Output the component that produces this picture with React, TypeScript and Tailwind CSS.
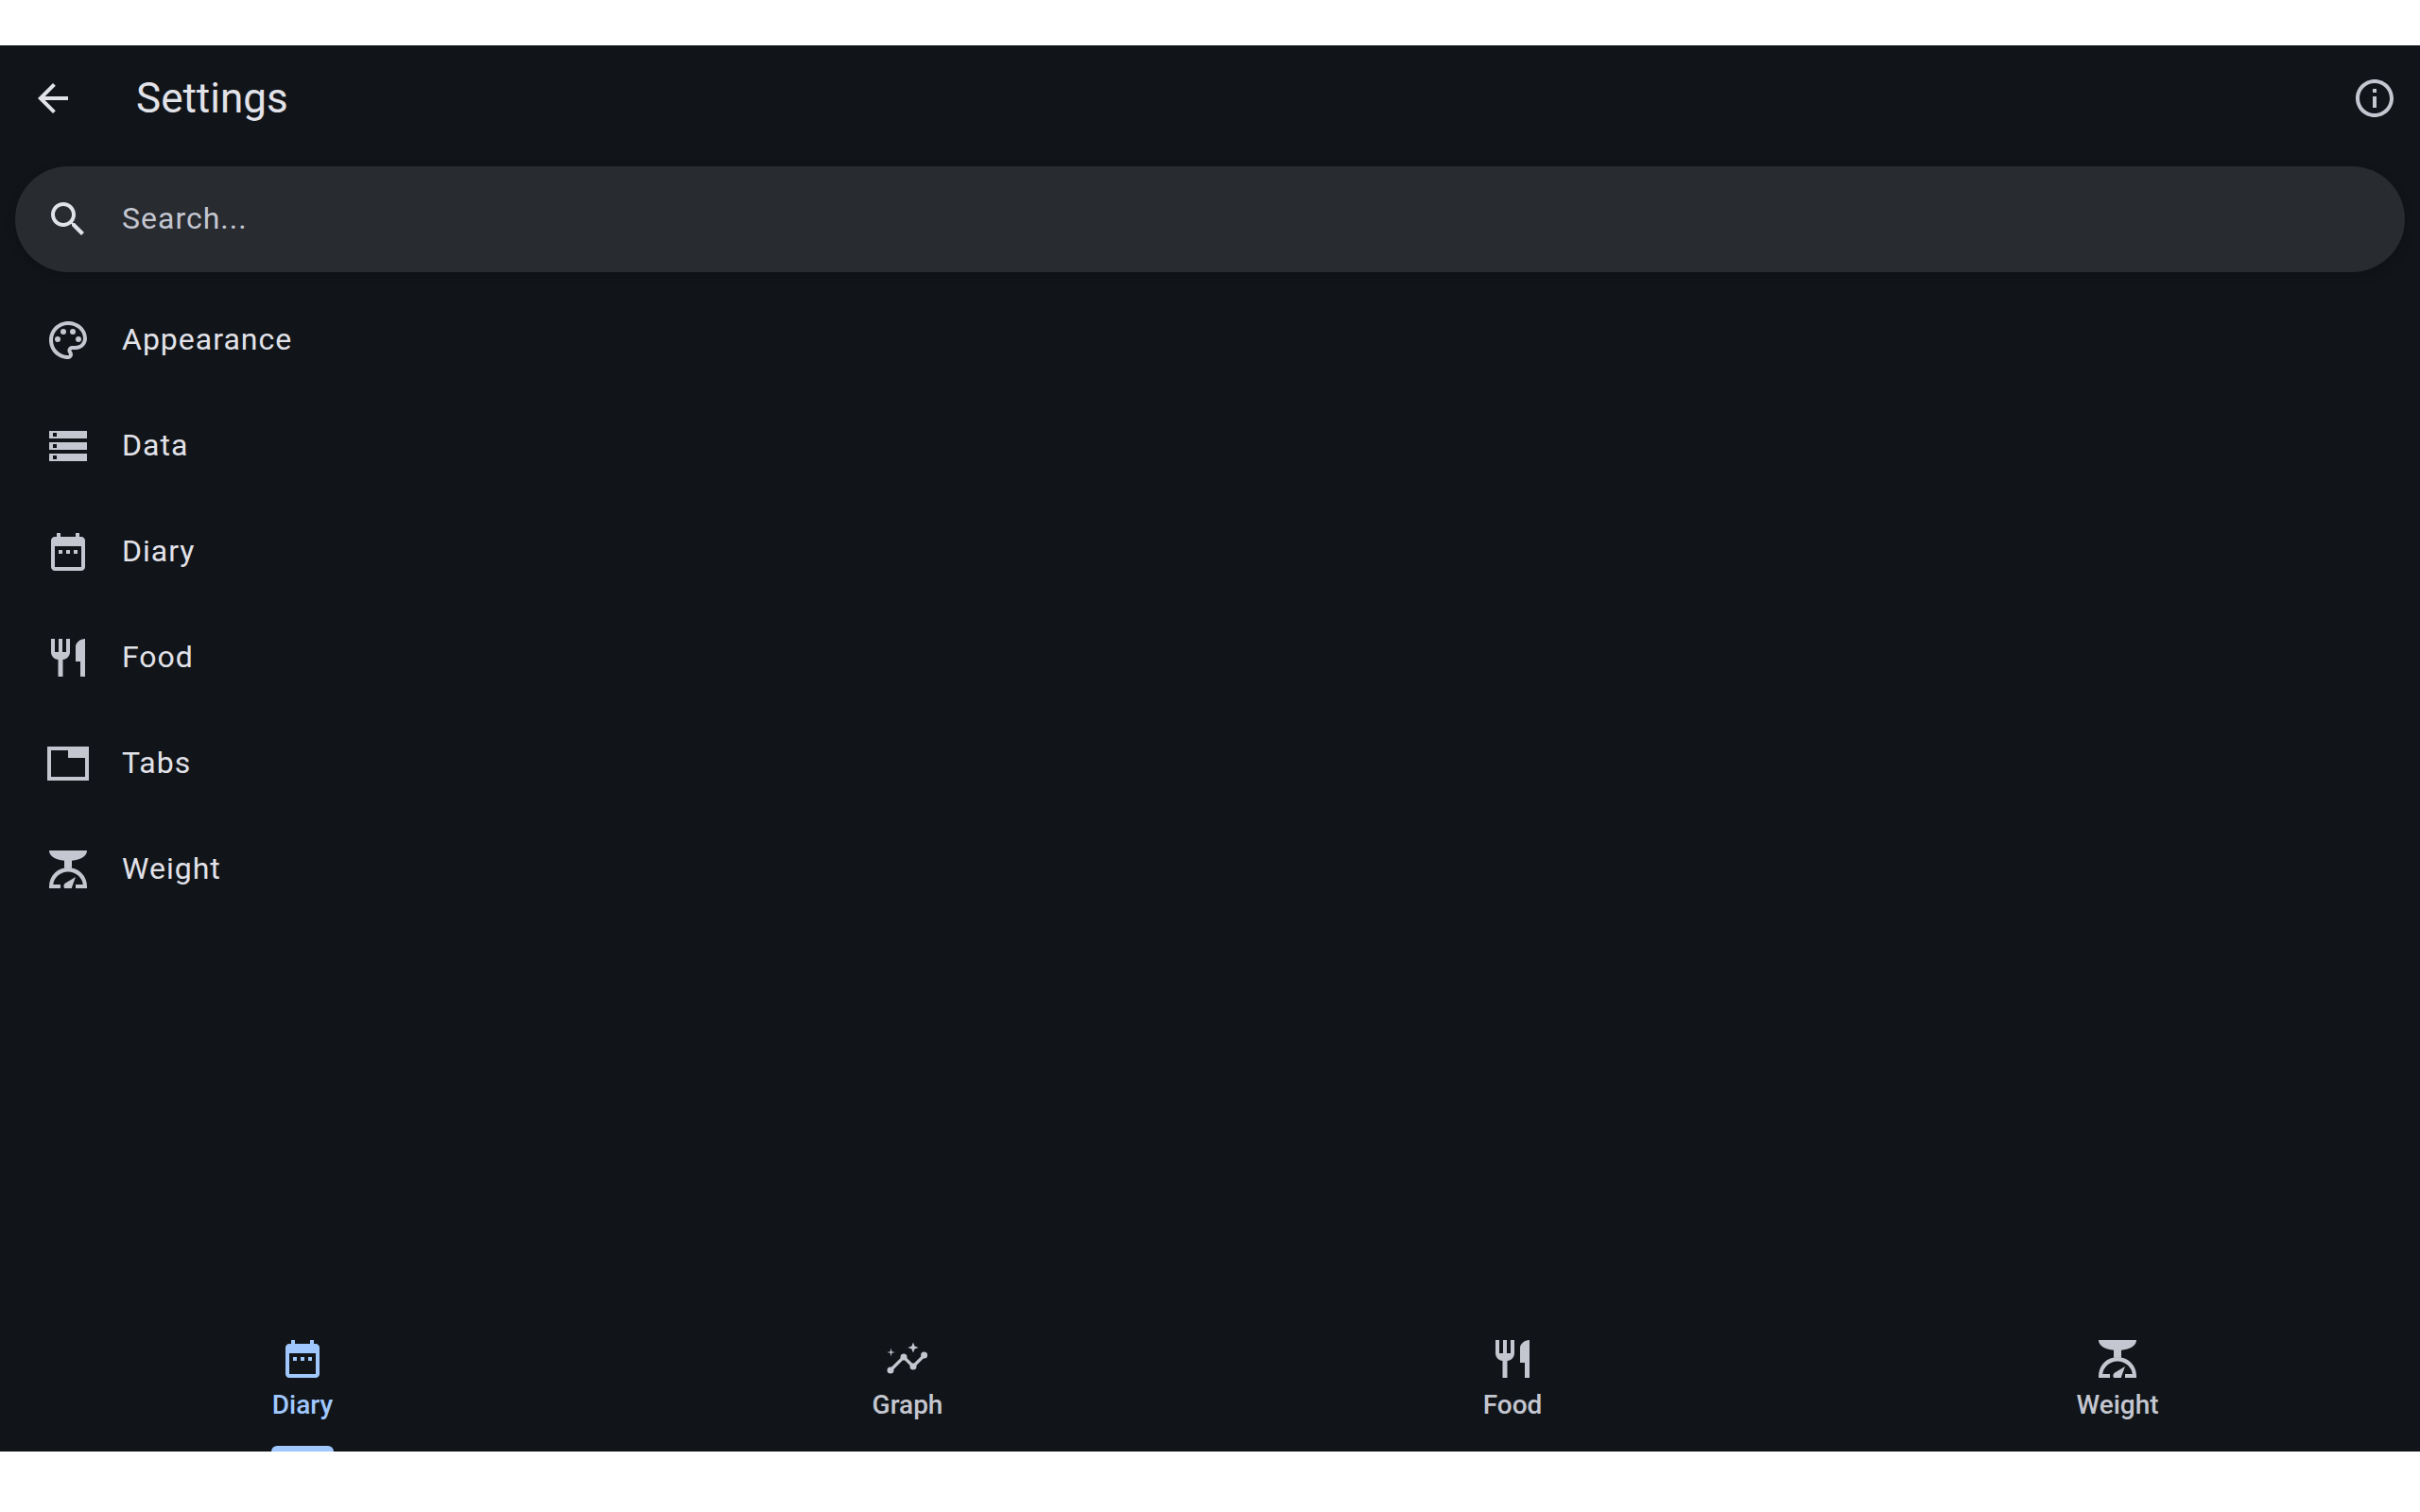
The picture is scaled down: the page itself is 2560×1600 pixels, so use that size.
import React from 'react';

type IconProps = { className?: string };

const Icon: React.FC<IconProps & { children: React.ReactNode }> = ({ className, children }) => (
  <svg viewBox="0 0 24 24" fill="currentColor" className={`w-12 h-12 shrink-0 ${className ?? ''}`}>
    {children}
  </svg>
);

const ArrowBack = (p: IconProps) => (
  <Icon {...p}><path d="M20 11H7.83l5.59-5.59L12 4l-8 8 8 8 1.41-1.41L7.83 13H20v-2z" /></Icon>
);
const Info = (p: IconProps) => (
  <Icon {...p}><path d="M11 7h2v2h-2zm0 4h2v6h-2zm1-9C6.48 2 2 6.48 2 12s4.48 10 10 10 10-4.48 10-10S17.52 2 12 2zm0 18c-4.41 0-8-3.59-8-8s3.59-8 8-8 8 3.59 8 8-3.59 8-8 8z" /></Icon>
);
const Search = (p: IconProps) => (
  <Icon {...p}><path d="M15.5 14h-.79l-.28-.27C15.41 12.59 16 11.11 16 9.5 16 5.91 13.09 3 9.5 3S3 5.91 3 9.5 5.91 16 9.5 16c1.61 0 3.09-.59 4.23-1.57l.27.28v.79l5 4.99L20.49 19l-4.99-5zm-6 0C7.01 14 5 11.99 5 9.5S7.01 5 9.5 5 14 7.01 14 9.5 11.99 14 9.5 14z" /></Icon>
);
const Palette = (p: IconProps) => (
  <Icon {...p}>
    <path d="M12 22C6.49 22 2 17.51 2 12S6.49 2 12 2s10 4.04 10 9c0 3.31-2.69 6-6 6h-1.77c-.28 0-.5.22-.5.5 0 .12.05.23.13.33.41.47.64 1.06.64 1.67 0 1.38-1.12 2.5-2.5 2.5zm0-18c-4.41 0-8 3.59-8 8s3.59 8 8 8c.28 0 .5-.22.5-.5 0-.16-.08-.28-.14-.35-.41-.46-.63-1.05-.63-1.65 0-1.38 1.12-2.5 2.5-2.5H16c2.21 0 4-1.79 4-4 0-3.86-3.59-7-8-7z" />
    <circle cx="6.5" cy="11.5" r="1.5" />
    <circle cx="9.5" cy="7.5" r="1.5" />
    <circle cx="14.5" cy="7.5" r="1.5" />
    <circle cx="17.5" cy="11.5" r="1.5" />
  </Icon>
);
const Storage = (p: IconProps) => (
  <Icon {...p}><path d="M2 20h20v-4H2v4zm2-3h2v2H4v-2zM2 4v4h20V4H2zm4 3H4V5h2v2zm-4 7h20v-4H2v4zm2-3h2v2H4v-2z" /></Icon>
);
const Calendar = (p: IconProps) => (
  <Icon {...p}>
    <path d="M19 4h-1V2h-2v2H8V2H6v2H5c-1.1 0-2 .9-2 2v14c0 1.1.9 2 2 2h14c1.1 0 2-.9 2-2V6c0-1.1-.9-2-2-2zm0 16H5V9h14v11z" />
    <path d="M7 11h2v2H7zM11 11h2v2h-2zM15 11h2v2h-2z" />
  </Icon>
);
const Restaurant = (p: IconProps) => (
  <Icon {...p}><path d="M11 9H9V2H7v7H5V2H3v7c0 2.12 1.66 3.84 3.75 3.97V22h2.5v-9.03C11.34 12.84 13 11.12 13 9V2h-2v7zm5-3v8h2.5v8H21V2c-2.76 0-5 2.24-5 4z" /></Icon>
);
const Tab = (p: IconProps) => (
  <Icon {...p}><path fillRule="evenodd" d="M23 3H1v18h22V3zm-2 16H3V5h9v4h9v10z" /></Icon>
);
const Scale = (p: IconProps) => (
  <Icon {...p}>
    <path d="M2 2h20c0 3-3.2 5-8 5.4v4H10v-4C5.2 7 2 5 2 2z" />
    <path d="M2 22v-1a10 10 0 0 1 20 0v1h-6v-2h3.9a8 8 0 0 0-15.8 0H8v2H2z" />
    <path d="M16 16l-5.4 3.2a1.9 1.9 0 0 0-.5 2.8h3.8a1.9 1.9 0 0 0 .2-.8L16 16z" />
  </Icon>
);
const AutoGraph = (p: IconProps) => (
  <Icon {...p}>
    <path d="M3 18l7-7 5 5 6-6" fill="none" stroke="currentColor" strokeWidth="1.6" />
    <circle cx="3" cy="18" r="1.75" />
    <circle cx="10" cy="11" r="1.75" />
    <circle cx="15" cy="16" r="1.75" />
    <circle cx="20.8" cy="10" r="1.75" />
    <path d="M15 3.2l.8 2 2 .8-2 .8-.8 2-.8-2-2-.8 2-.8z" />
    <path d="M3.3 6.3l.4 1.8 1.8.4-1.8.4-.4 1.8-.4-1.8-1.8-.4 1.8-.4z" />
  </Icon>
);

const SETTINGS = [
  { label: 'Appearance', icon: Palette },
  { label: 'Data', icon: Storage },
  { label: 'Diary', icon: Calendar },
  { label: 'Food', icon: Restaurant },
  { label: 'Tabs', icon: Tab },
  { label: 'Weight', icon: Scale },
];

const NAV = [
  { label: 'Diary', icon: Calendar, active: true },
  { label: 'Graph', icon: AutoGraph, active: false },
  { label: 'Food', icon: Restaurant, active: false },
  { label: 'Weight', icon: Scale, active: false },
];

const App: React.FC = () => {
  return (
    <div className="h-screen bg-white pt-12 pb-16 antialiased font-['Roboto',sans-serif]">
      <div className="h-full flex flex-col bg-[#111519]">
        {/* App bar */}
        <div className="h-28 shrink-0 flex items-center pl-8 pr-6">
          <ArrowBack className="text-[#e2e2e9]" />
          <h1 className="ml-[64px] text-[44px] leading-[56px] text-[#e2e2e9]">Settings</h1>
          <Info className="ml-auto text-[#c4c6d0]" />
        </div>

        {/* Search */}
        <div className="mt-4 px-4 shrink-0">
          <div className="h-28 rounded-full bg-[#282b30] flex items-center pl-8 shadow-[0_4px_12px_rgba(0,0,0,0.2)]">
            <Search className="text-[#e2e2e9]" />
            <span className="ml-[33px] pb-[2px] text-[32px] tracking-[1px] text-[#c4c6d0]">Search...</span>
          </div>
        </div>

        {/* Settings list */}
        <div className="mt-4 flex-1">
          {SETTINGS.map(item => (
            <div key={item.label} className="h-28 flex items-center pl-12">
              <item.icon className="text-[#c4c6d0]" />
              <span className="ml-[33px] pb-[2px] text-[32px] tracking-[1px] text-[#e2e2e9]">{item.label}</span>
            </div>
          ))}
        </div>

        {/* Bottom navigation */}
        <div className="h-[122px] shrink-0 grid grid-cols-4">
          {NAV.map(item => (
            <div key={item.label} className="relative flex flex-col items-center">
              <item.icon className={item.active ? 'text-[#a0c8ff]' : 'text-[#c4c6d0]'} />
              <span className={`mt-[5px] text-[28px] leading-[40px] font-medium ${item.active ? 'text-[#a0c8ff]' : 'text-[#c4c6d0]'}`}>
                {item.label}
              </span>
              {item.active && (
                <div className="absolute bottom-0 w-[66px] h-[6px] rounded-t-[6px] bg-[#a0c8ff]" />
              )}
            </div>
          ))}
        </div>
      </div>
    </div>
  );
};

export default App;
